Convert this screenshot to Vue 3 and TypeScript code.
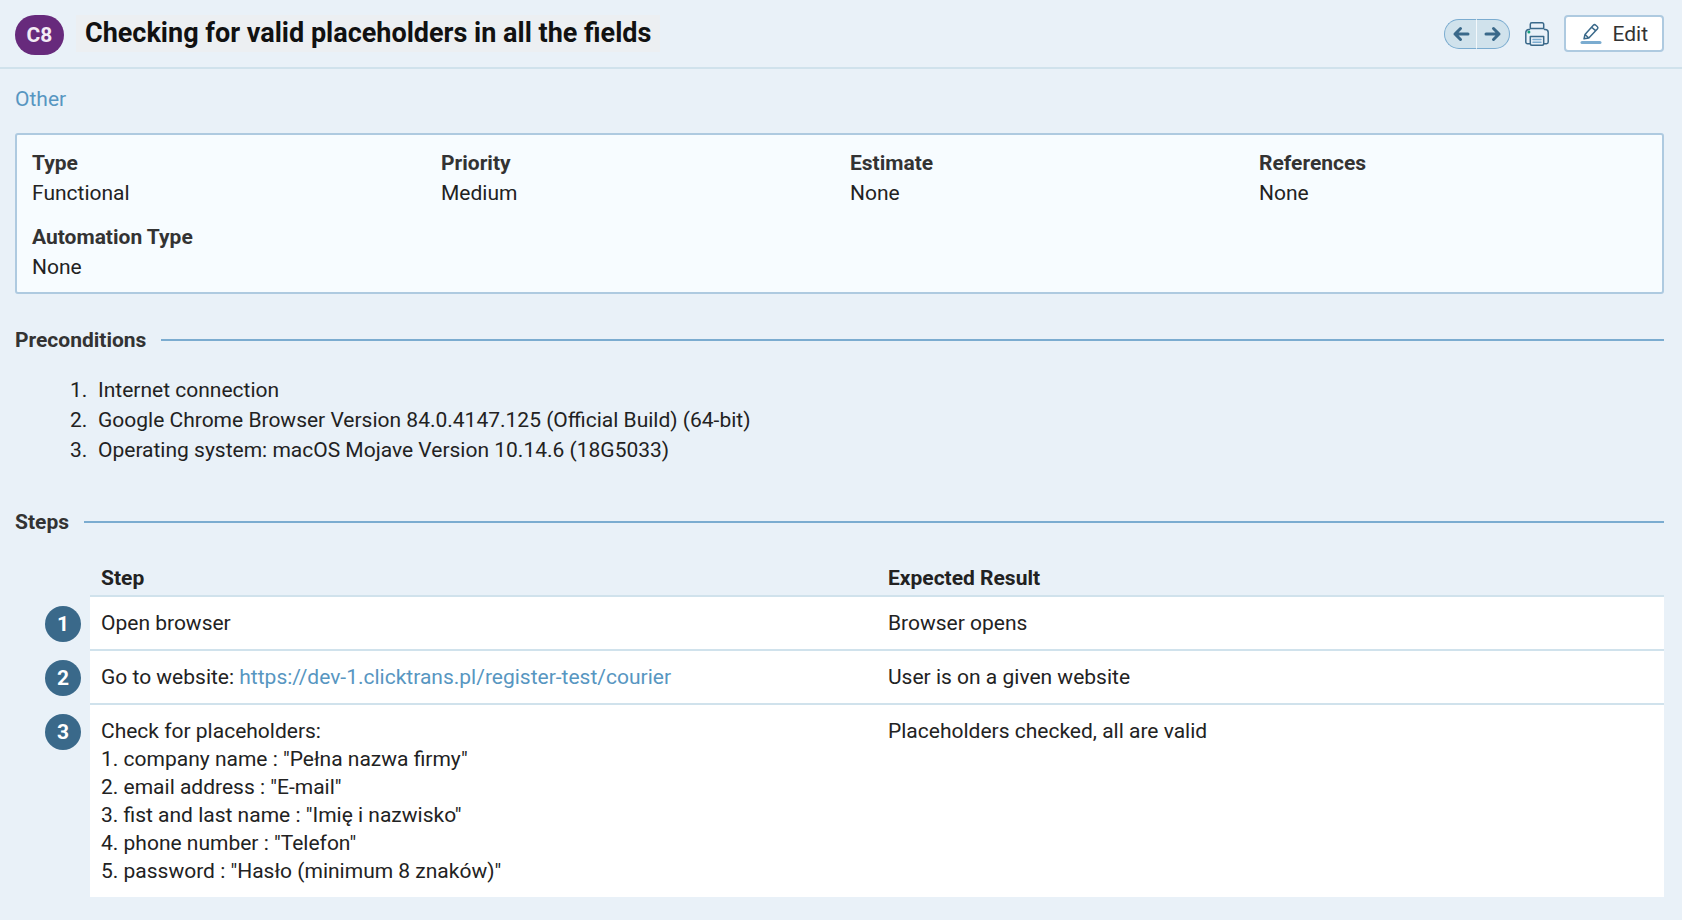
<script setup lang="ts">
interface Field {
  label: string
  value: string
}

interface Step {
  lines: string[]
  link?: string
  expected: string
}

const fields: Field[] = [
  { label: 'Type', value: 'Functional' },
  { label: 'Priority', value: 'Medium' },
  { label: 'Estimate', value: 'None' },
  { label: 'References', value: 'None' },
  { label: 'Automation Type', value: 'None' },
]

const preconditions: string[] = [
  'Internet connection',
  'Google Chrome Browser Version 84.0.4147.125 (Official Build) (64-bit)',
  'Operating system: macOS Mojave Version 10.14.6 (18G5033)',
]

const steps: Step[] = [
  { lines: ['Open browser'], expected: 'Browser opens' },
  {
    lines: ['Go to website: '],
    link: 'https://dev-1.clicktrans.pl/register-test/courier',
    expected: 'User is on a given website',
  },
  {
    lines: [
      'Check for placeholders:',
      '1. company name : "Pełna nazwa firmy"',
      '2. email address : "E-mail"',
      '3. fist and last name : "Imię i nazwisko"',
      '4. phone number : "Telefon"',
      '5. password : "Hasło (minimum 8 znaków)"',
    ],
    expected: 'Placeholders checked, all are valid',
  },
]
</script>

<template>
  <div class="page">
    <header class="header">
      <span class="badge">C8</span>
      <h1 class="title">Checking for valid placeholders in all the fields</h1>
      <div class="actions">
        <nav class="pager" aria-label="Test cases">
          <button type="button" class="pager-button" aria-label="Previous">
            <svg width="18" height="16" viewBox="0 0 18 16">
              <path d="M16 8H3M8.5 2.500L3 8l5.500 5.500" />
            </svg>
          </button>
          <button type="button" class="pager-button" aria-label="Next">
            <svg width="18" height="16" viewBox="0 0 18 16">
              <path d="M2 8h13M9.500 2.500L15 8l-5.500 5.500" />
            </svg>
          </button>
        </nav>
        <button type="button" class="print" aria-label="Print">
          <svg width="24" height="24" viewBox="0 0 24 24">
            <path class="ink" d="M5.300 21.700H2.500A1.700 1.700 0 0 1 .8 20V10.500A3 3 0 0 1 3.800 7.500h.7M18.700 21.700h2.800a1.700 1.700 0 0 0 1.700-1.700V10.500a3 3 0 0 0-3-3h-.7" />
            <path class="ink" d="M5.300 6.500V2.300A1.500 1.500 0 0 1 6.800.8h10.400a1.500 1.500 0 0 1 1.500 1.500v4.200z" />
            <path class="ink" d="M5.300 14.500h13.400v7.200a1.500 1.500 0 0 1-1.500 1.500H6.800a1.500 1.500 0 0 1-1.500-1.500z" />
            <path class="lines" d="M8 17.500h8M8 20.300h8" />
            <circle cx="3.900" cy="9.900" r="1.500" fill="#14a07c" />
          </svg>
        </button>
        <button type="button" class="edit">
          <svg width="22" height="22" viewBox="0 0 22 22">
            <path class="ink" d="M4 15.800l1-4.300L13.300 2.300a1.800 1.800 0 0 1 2.500-.1l1.400 1.300a1.800 1.800 0 0 1 .1 2.500L8.800 15zM5 11.500L8.800 15M11.700 4.200l3.800 3.400" />
            <path class="bar" d="M2 19.500h18" />
          </svg>
          Edit
        </button>
      </div>
    </header>

    <main class="content">
      <a class="section-link" href="#">Other</a>

      <dl class="fields">
        <div v-for="field in fields" :key="field.label">
          <dt>{{ field.label }}</dt>
          <dd>{{ field.value }}</dd>
        </div>
      </dl>

      <section class="preconditions">
        <h2 class="heading">Preconditions</h2>
        <ol class="list">
          <li v-for="item in preconditions" :key="item">{{ item }}</li>
        </ol>
      </section>

      <section>
        <h2 class="heading">Steps</h2>
        <table class="steps">
          <thead>
            <tr>
              <td class="number"></td>
              <th scope="col">Step</th>
              <th scope="col">Expected Result</th>
            </tr>
          </thead>
          <tbody>
            <tr v-for="(step, index) in steps" :key="index">
              <td class="number"><span class="circle">{{ index + 1 }}</span></td>
              <td class="cell">
                <div v-for="line in step.lines" :key="line">{{ line }}<a v-if="step.link" :href="step.link">{{ step.link }}</a></div>
              </td>
              <td class="cell">{{ step.expected }}</td>
            </tr>
          </tbody>
        </table>
      </section>
    </main>
  </div>
</template>

<style>
body {
  margin: 0;
  background: #e9f1f8;
}
</style>

<style scoped>
.page {
  color: #222;
  font-family: Roboto, "Liberation Sans", sans-serif;
  font-size: 21px;
  line-height: 28px;
}

.header {
  display: flex;
  align-items: center;
  height: 67px;
  padding: 0 18px 0 15px;
  border-bottom: 2px solid #d0e2ec;
}

.badge {
  width: 49px;
  margin: 3px 12px 0 0;
  border-radius: 20px;
  background: #672a7c;
  color: #f3ebf5;
  font-size: 21px;
  font-weight: 700;
  line-height: 40px;
  text-align: center;
}

.title {
  margin: 0;
  padding: 0 9px;
  background: #eceff2;
  color: #111;
  font-size: 27px;
  font-weight: 700;
  line-height: 37px;
}

.actions {
  display: flex;
  align-items: center;
  gap: 15px;
  margin-left: auto;
}

button {
  padding: 0;
  border: 0;
  background: none;
  color: inherit;
  font: inherit;
  cursor: pointer;
}

svg {
  display: block;
  fill: none;
  stroke-linecap: round;
  stroke-linejoin: round;
}

.pager {
  display: flex;
}

.pager-button {
  display: flex;
  align-items: center;
  justify-content: center;
  box-sizing: border-box;
  width: 33px;
  height: 30px;
  border: 1px solid #7bacd0;
  background: #d0e2ec;
  stroke: #3a698a;
  stroke-width: 3;
}

.pager-button:first-child {
  border-right-color: #f4f9fc;
  border-radius: 15px 0 0 15px;
}

.pager-button:last-child {
  border-left: 0;
  border-radius: 0 15px 15px 0;
}

.ink {
  stroke: #3a698a;
  stroke-width: 1.5;
}

.lines {
  stroke: #7bacd0;
  stroke-width: 1.5;
}

.bar {
  stroke: #7bacd0;
  stroke-width: 3;
}

.edit {
  display: flex;
  align-items: center;
  gap: 10px;
  box-sizing: border-box;
  height: 37px;
  padding: 0 14px;
  border: 2px solid #aecae0;
  border-radius: 4px;
  background: #fff;
  color: #333;
}

.content {
  padding: 16px 18px 22px 15px;
}

a {
  color: #5796c1;
  text-decoration: none;
}

.section-link {
  display: block;
}

.fields {
  display: grid;
  grid-template-columns: repeat(4, 1fr);
  gap: 14px 22px;
  margin: 20px 0 31px;
  padding: 13px 16px 10px 15px;
  border: 2px solid #aecae0;
  border-radius: 3px;
  background: #f7fcff;
  line-height: 30px;
}

dt {
  color: #333;
  font-weight: 700;
}

dd {
  margin: 0;
}

.heading {
  display: flex;
  align-items: center;
  gap: 15px;
  margin: 0;
  color: #333;
  font-size: 21px;
  font-weight: 700;
  line-height: 30px;
}

.heading::after {
  flex: 1;
  height: 2px;
  background: #7bacd0;
  content: "";
}

.list {
  margin: 20px 0 42px;
  padding-left: 83px;
  line-height: 30px;
}

.list li::marker {
  content: counter(list-item) ".\2002";
}

.steps {
  width: 100%;
  margin-top: 26px;
  border-collapse: separate;
  border-spacing: 0;
  table-layout: fixed;
}

th {
  padding: 0 11px 2px;
  border-bottom: 2px solid #d0e2ec;
  font-weight: 700;
  line-height: 30px;
  text-align: left;
}

.number {
  width: 75px;
  padding: 9px 0 0;
  vertical-align: top;
}

.circle {
  display: block;
  width: 36px;
  margin-left: 30px;
  border-radius: 50%;
  background: #3a698a;
  color: #fff;
  font-size: 21px;
  font-weight: 700;
  line-height: 36px;
  text-align: center;
}

.cell {
  padding: 12px 11px;
  background: #fff;
  vertical-align: top;
}

tbody tr:not(:last-child) .cell {
  border-bottom: 2px solid #d0e2ec;
}
</style>
